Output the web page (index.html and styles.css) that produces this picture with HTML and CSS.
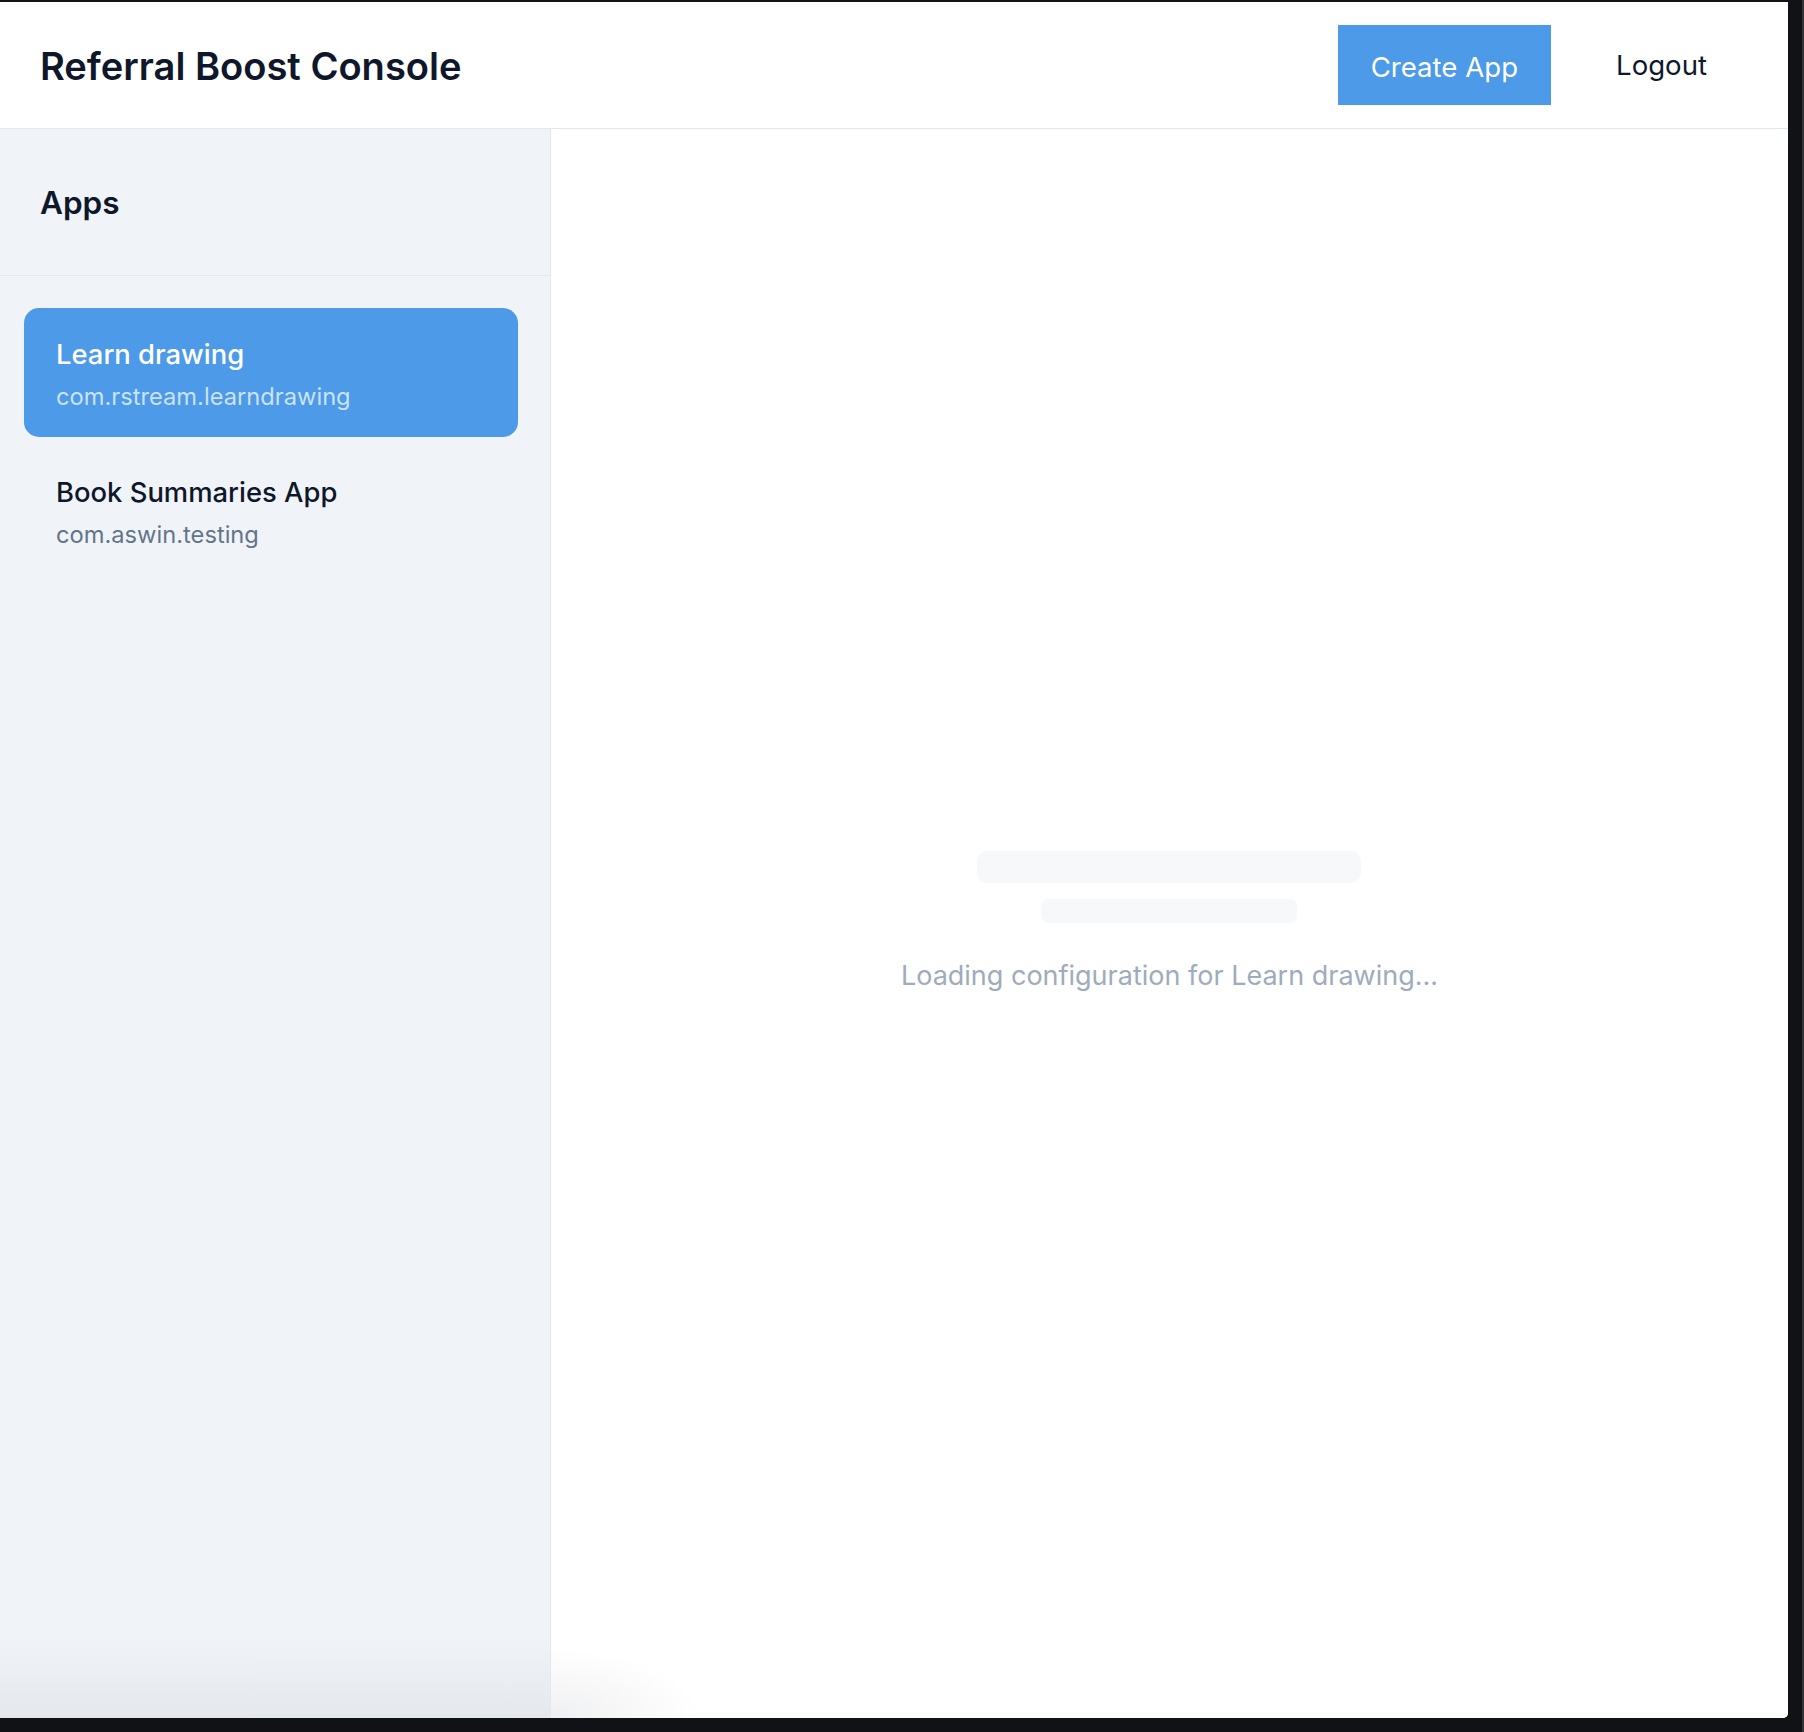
FILE: index.html
```html
<!DOCTYPE html>
<html lang="en">
<head>
<meta charset="utf-8">
<title>Referral Boost Console</title>
<link rel="stylesheet" href="styles.css">
</head>
<body>
<div class="desk">
  <div class="window">
    <header class="topbar">
      <h1 class="brand">Referral Boost Console</h1>
      <div class="actions">
        <button class="btn-primary">Create App</button>
        <button class="btn-plain">Logout</button>
      </div>
    </header>
    <div class="body">
      <aside class="sidebar">
        <div class="sidebar-head"><h2 class="sidebar-title">Apps</h2></div>
        <ul class="app-list">
          <li class="app-item is-active">
            <div class="app-name">Learn drawing</div>
            <div class="app-id">com.rstream.learndrawing</div>
          </li>
          <li class="app-item">
            <div class="app-name">Book Summaries App</div>
            <div class="app-id">com.aswin.testing</div>
          </li>
        </ul>
      </aside>
      <main class="content">
        <div class="loading">
          <div class="skeleton skeleton-lg"></div>
          <div class="skeleton skeleton-sm"></div>
          <p class="loading-text">Loading configuration for Learn drawing...</p>
        </div>
      </main>
    </div>
  </div>
</div>
</body>
</html>
```
FILE: styles.css
```css
* { box-sizing: border-box; }
html, body { margin: 0; padding: 0; background: #111216; }
body { font-family: "Inter", "Noto Sans", sans-serif; color: #0f172a; }

.desk {
  height: 1732px;
  padding: 2px 14px 14px 0;
  background: #111216;
  border-right: 2px solid #34353a;
  display: flex;
}
.window {
  flex: 1;
  background: #ffffff;
  border-bottom-right-radius: 5px;
  overflow: hidden;
  display: flex;
  flex-direction: column;
}

.topbar {
  height: 127px;
  flex: none;
  border-bottom: 1px solid #e2e8f0;
  display: flex;
  align-items: center;
  justify-content: space-between;
  padding: 0 49px 0 40px;
}
.brand {
  margin: 3px 0 0;
  font-size: 38.1px;
  font-weight: 600;
  line-height: 1.2;
  color: #0f172a;
}
.actions { display: flex; align-items: center; gap: 33px; }
.btn-primary {
  font-family: inherit;
  font-size: 27.6px;
  font-weight: 400;
  line-height: 1.5;
  color: #ffffff;
  background: #4c9ae8;
  border: 0;
  border-radius: 0;
  padding: 22px 33px 16px;
  height: 80px;
}
.btn-plain {
  font-family: inherit;
  font-size: 27.6px;
  font-weight: 400;
  line-height: 1.5;
  color: #0f172a;
  background: transparent;
  border: 0;
  padding: 2px 32px 0;
}

.body { flex: 1; display: flex; min-height: 0; }

.sidebar {
  width: 551px;
  flex: none;
  background: #f0f4f8;
  border-right: 1px solid #e2e8f0;
  background-image: linear-gradient(to bottom, rgba(0,0,0,0) 0, rgba(0,0,0,0) calc(100% - 80px), rgba(40,50,70,0.06) 100%);
  display: flex;
  flex-direction: column;
}
.sidebar-head {
  height: 147px;
  border-bottom: 1px solid #e2e8f0;
  display: flex;
  align-items: center;
  padding: 2px 40px 0;
}
.sidebar-title {
  margin: 0;
  font-size: 31.5px;
  font-weight: 600;
  line-height: 1.2;
  color: #0f172a;
}
.app-list {
  list-style: none;
  margin: 0;
  padding: 32px 32px 32px 24px;
  display: flex;
  flex-direction: column;
  gap: 9px;
}
.app-item {
  padding: 26px 32px 22px;
  border-radius: 15px;
}
.app-item.is-active { background: #4c9ae8; }
.app-name {
  font-size: 27.4px;
  font-weight: 500;
  line-height: 1.5;
  color: #0f172a;
}
.app-id {
  margin-top: 4px;
  font-size: 23.7px;
  line-height: 1.5;
  color: #64748b;
}
.is-active .app-name { color: #ffffff; }
.is-active .app-id { color: rgba(255,255,255,0.72); }

.content {
  flex: 1;
  display: flex;
  align-items: center;
  justify-content: center;
  background: #ffffff;
  background-image: radial-gradient(ellipse 150px 70px at 0 100%, rgba(30,40,60,0.07), rgba(30,40,60,0) 100%);
}
.loading {
  display: flex;
  flex-direction: column;
  align-items: center;
}
.skeleton { background: #f7f8fa; }
.skeleton-lg { width: 384px; height: 32px; border-radius: 10px; }
.skeleton-sm { width: 256px; height: 24px; border-radius: 8px; margin-top: 16px; }
.loading-text {
  margin: 33px 0 0;
  font-size: 27px;
  line-height: 1.5;
  color: #a0abbb;
}
```
